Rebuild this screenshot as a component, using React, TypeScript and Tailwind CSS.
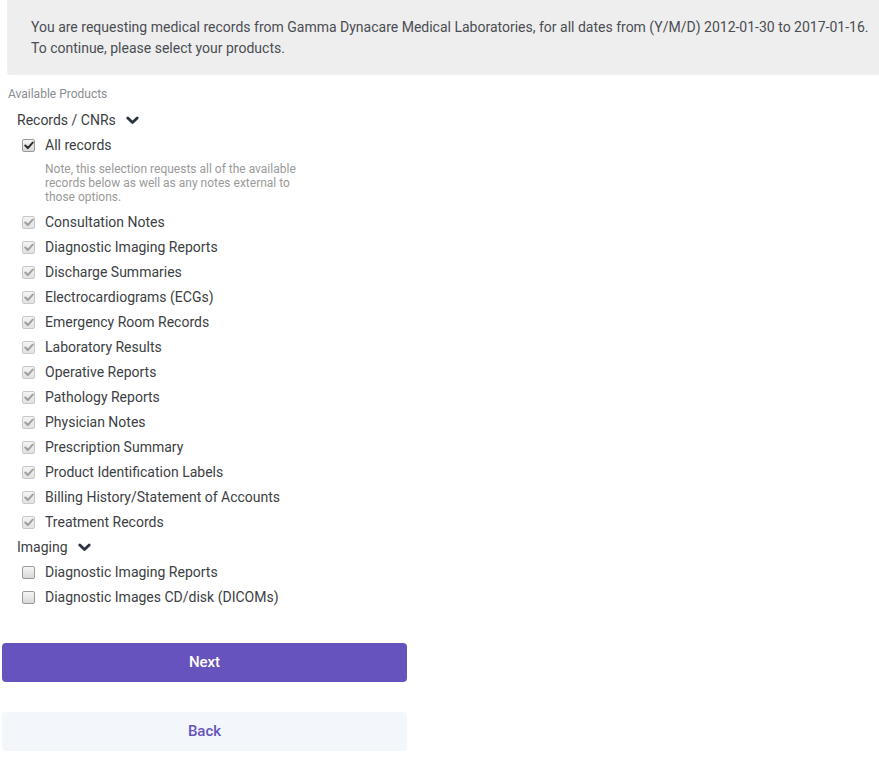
import React from "react";

function Box({ checked, disabled }: { checked?: boolean; disabled?: boolean }) {
  return (
    <span
      className={
        "inline-flex h-[13px] w-[13px] items-center justify-center rounded-[2px] border " +
        (disabled
          ? "border-[#c8c8c8] bg-gradient-to-b from-[#f4f4f4] to-[#e2e2e2]"
          : "border-[#9a9a9a] bg-gradient-to-b from-[#f6f6f6] to-[#d8d8d8]")
      }
    >
      {checked && (
        <svg width="10" height="9" viewBox="0 0 10 9">
          <path
            d="M1.3 4.6 L3.8 7.1 L8.7 1.6"
            fill="none"
            stroke={disabled ? "#a0a0a0" : "#2f2f2f"}
            strokeWidth="2.1"
            strokeLinecap="round"
            strokeLinejoin="round"
          />
        </svg>
      )}
    </span>
  );
}

function Chevron() {
  return (
    <svg width="13" height="9" viewBox="0 0 13 9" className="ml-[10px]">
      <path d="M1.8 2 L6.5 6.6 L11.2 2" fill="none" stroke="#2c3440" strokeWidth="2.8" strokeLinecap="round" strokeLinejoin="round" />
    </svg>
  );
}

function Row({ label, checked, disabled }: { label: string; checked?: boolean; disabled?: boolean }) {
  return (
    <div className="flex h-[25px] items-center pl-[22px]">
      <Box checked={checked} disabled={disabled} />
      <span className="ml-[10px] text-[14px] text-[#3c4043]">{label}</span>
    </div>
  );
}

const records = [
  "Consultation Notes",
  "Diagnostic Imaging Reports",
  "Discharge Summaries",
  "Electrocardiograms (ECGs)",
  "Emergency Room Records",
  "Laboratory Results",
  "Operative Reports",
  "Pathology Reports",
  "Physician Notes",
  "Prescription Summary",
  "Product Identification Labels",
  "Billing History/Statement of Accounts",
  "Treatment Records",
];

export default function App() {
  return (
    <div className="min-h-[758px] w-[879px] bg-white font-['Roboto',sans-serif] text-[#3c4043]">
      <div className="ml-[7px] h-[75px] rounded-bl-[4px] bg-[#eeeeee] pl-[24px] pt-[17px] text-[14px] leading-[21px] text-[#4a4d52]">
        <div>You are requesting medical records from Gamma Dynacare Medical Laboratories, for all dates from (Y/M/D) 2012-01-30 to 2017-01-16.</div>
        <div>To continue, please select your products.</div>
      </div>
      <div className="ml-[8px] mt-[12px] text-[12px] leading-[14px] text-[#8a8d91]">Available Products</div>
      <div className="mt-[7px] flex h-[25px] items-center pl-[17px] text-[14px] text-[#3c4043]">
        Records / CNRs
        <Chevron />
      </div>
      <Row label="All records" checked />
      <div className="ml-[45px] mt-[4px] w-[260px] text-[12px] leading-[14px] text-[#9a9a9a]">
        Note, this selection requests all of the available records below as well as any notes external to those options.
      </div>
      <div className="mt-[6px]">
        {records.map((r) => (
          <Row key={r} label={r} checked disabled />
        ))}
      </div>
      <div className="flex h-[25px] items-center pl-[17px] text-[14px] text-[#3c4043]">
        Imaging
        <Chevron />
      </div>
      <Row label="Diagnostic Imaging Reports" />
      <Row label="Diagnostic Images CD/disk (DICOMs)" />
      <div className="ml-[2px] mt-[33px] flex h-[39px] w-[405px] items-center justify-center rounded-[4px] bg-[#6753bd] text-[15px] font-medium text-white">
        Next
      </div>
      <div className="ml-[2px] mt-[30px] flex h-[39px] w-[405px] items-center justify-center rounded-[4px] bg-[#f3f6fb] text-[15px] font-medium text-[#6753bd]">
        Back
      </div>
    </div>
  );
}
